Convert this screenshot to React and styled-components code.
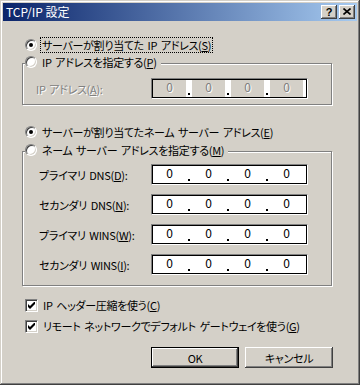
import React from 'react';
import styled, { createGlobalStyle, css } from 'styled-components';

const Global = createGlobalStyle`
  html, body { margin: 0; padding: 0; background: #D4D0C8; }
  #root { width: 360px; height: 385px; }
`;

const raised = css`
  box-shadow: inset -1px -1px #404040, inset 1px 1px #fff, inset -2px -2px #808080, inset 2px 2px #D4D0C8;
`;

const Window = styled.div`
  box-sizing: border-box;
  width: 360px;
  height: 385px;
  padding: 3px;
  background: #D4D0C8;
  box-shadow: inset -1px -1px #404040, inset 1px 1px #D4D0C8, inset -2px -2px #808080, inset 2px 2px #fff;
  display: flex;
  flex-direction: column;
  font-family: "Noto Sans CJK JP", "Noto Sans", sans-serif;
  font-size: 11px;
  letter-spacing: -0.3px;
  word-spacing: 1.5px;
  font-feature-settings: "palt";
  color: #000;
`;

const TitleBar = styled.div`
  height: 18px;
  display: flex;
  align-items: center;
  justify-content: space-between;
  background: linear-gradient(to right, #0A246A, #A6CAF0);
  padding: 0 2px 0 2px;
`;

const Title = styled.span`
  color: #fff;
  font-size: 12px;
  letter-spacing: 0;
  word-spacing: 0;
  line-height: 18px;
  padding-left: 1px;
`;

const TitleButtons = styled.div`
  display: flex;
  gap: 2px;
`;

const TitleButton = styled.div`
  width: 16px;
  height: 14px;
  box-sizing: border-box;
  background: #D4D0C8;
  ${raised};
  display: flex;
  align-items: center;
  justify-content: center;
  font-family: "Liberation Sans", sans-serif;
  font-weight: bold;
  font-size: 11px;
  letter-spacing: 0;
  line-height: 14px;
  padding-bottom: 1px;
`;

const Content = styled.div`
  display: flex;
  flex-direction: column;
  padding: 15px 25px 0 19px;
`;

const OptionRow = styled.div`
  display: flex;
  align-items: center;
  height: 18px;
  margin-left: ${p => p.$indent ?? 3}px;
  margin-top: ${p => p.$mt ?? 0}px;
  align-self: flex-start;
  background: #D4D0C8;
  padding-right: ${p => p.$pr ?? 0}px;
`;

const RadioMark = styled.span`
  box-sizing: border-box;
  width: 12px;
  height: 12px;
  border-radius: 50%;
  border: 1px solid;
  border-color: #808080 #fff #fff #808080;
  box-shadow: inset 1px 1px #404040, inset -1px -1px #D4D0C8;
  background: #fff;
  display: flex;
  align-items: center;
  justify-content: center;
  flex: none;
  &::after {
    content: "";
    width: 4px;
    height: 4px;
    border-radius: 50%;
    background: ${p => (p.$checked ? '#000' : 'transparent')};
  }
`;

const CheckMark = styled.span`
  box-sizing: border-box;
  width: 13px;
  height: 13px;
  border: 1px solid;
  border-color: #808080 #fff #fff #808080;
  box-shadow: inset 1px 1px #404040, inset -1px -1px #D4D0C8;
  background: #fff;
  display: flex;
  align-items: center;
  justify-content: center;
  flex: none;
`;

const OptionLabel = styled.span`
  margin-left: ${p => p.$ml ?? 3}px;
  padding: 0 1px;
  border: 1px dotted ${p => (p.$focus ? '#000' : 'transparent')};
  line-height: 14px;
  white-space: nowrap;
`;

const Group = styled.div`
  display: flex;
  flex-direction: column;
  border: 1px solid #808080;
  box-shadow: inset 1px 1px #fff, 1px 1px #fff;
  margin-top: ${p => p.$mt}px;
  padding-bottom: ${p => p.$pb}px;
  width: 310px;
  box-sizing: border-box;
`;

const FieldRows = styled.div`
  display: flex;
  flex-direction: column;
  gap: 9px;
  margin-top: ${p => p.$mt}px;
`;

const FieldRow = styled.div`
  display: grid;
  grid-template-columns: 128px 157px;
  align-items: center;
`;

const FieldLabel = styled.span`
  padding-left: ${p => p.$pl}px;
  padding-top: 1px;
  white-space: nowrap;
  color: ${p => (p.$disabled ? '#808080' : '#000')};
  text-shadow: ${p => (p.$disabled ? '1px 1px #fff' : 'none')};
`;

const AddressBox = styled.div`
  box-sizing: border-box;
  width: 157px;
  height: 21px;
  border: 1px solid;
  border-color: #808080 #fff #fff #808080;
  box-shadow: inset 0 0 0 1px #000;
  background: #fff;
  padding: 1px;
  display: flex;
`;

const Segment = styled.span`
  width: 33px;
  display: flex;
  justify-content: center;
  align-items: flex-start;
  font-size: 12px;
  letter-spacing: 0;
  line-height: 12px;
  padding-top: 1px;
  background: ${p => (p.$disabled ? '#D4D0C8' : '#fff')};
  color: ${p => (p.$disabled ? '#808080' : '#000')};
  text-shadow: ${p => (p.$disabled ? '1px 1px #fff' : 'none')};
`;

const Sep = styled.span`
  width: 6px;
  display: flex;
  justify-content: center;
  align-items: flex-end;
  padding-bottom: 2px;
  box-sizing: border-box;
  &::after {
    content: "";
    width: 2px;
    height: 2px;
    background: #000;
  }
`;

const ButtonRow = styled.div`
  display: flex;
  justify-content: flex-end;
  gap: 6px;
  margin-top: 12px;
  margin-right: -1px;
`;

const Button = styled.div`
  box-sizing: border-box;
  width: 88px;
  height: 21px;
  display: flex;
  align-items: center;
  justify-content: center;
  background: #D4D0C8;
  ${raised};
  ${p => p.$default && css`
    border: 1px solid #000;
  `}
`;

const Address = ({ disabled }) => (
  <AddressBox>
    {[0, 1, 2, 3].map(i => (
      <React.Fragment key={i}>
        {i > 0 && <Sep />}
        <Segment $disabled={disabled}>0</Segment>
      </React.Fragment>
    ))}
  </AddressBox>
);

const Radio = ({ checked, focus, children, ...rest }) => (
  <OptionRow {...rest}>
    <RadioMark $checked={checked} />
    <OptionLabel $focus={focus}>{children}</OptionLabel>
  </OptionRow>
);

const Check = ({ children, ...rest }) => (
  <OptionRow {...rest}>
    <CheckMark>
      <svg width="7" height="7" viewBox="0 0 7 7">
        <path d="M0 2 L2 4 L6 0 L7 0 L7 2 L2 7 L0 5 Z" fill="#000" />
      </svg>
    </CheckMark>
    <OptionLabel $ml={3}>{children}</OptionLabel>
  </OptionRow>
);

export default function App() {
  return (
    <>
      <Global />
      <Window>
        <TitleBar>
          <Title>TCP/IP 設定</Title>
          <TitleButtons>
            <TitleButton>?</TitleButton>
            <TitleButton>
              <svg width="8" height="7" viewBox="0 0 8 7">
                <path d="M0.5 0.5 L7.5 6.5 M7.5 0.5 L0.5 6.5" stroke="#000" strokeWidth="1.6" />
              </svg>
            </TitleButton>
          </TitleButtons>
        </TitleBar>
        <Content>
          <Radio checked focus>サーバーが割り当てた IP アドレス(<u>S</u>)</Radio>
          <Group $mt={9} $pb={5}>
            <Radio $indent={2} $mt={-11} $pr={2}>IP アドレスを指定する(<u>P</u>)</Radio>
            <FieldRows $mt={7}>
              <FieldRow>
                <FieldLabel $pl={13} $disabled>IP アドレス(<u>A</u>):</FieldLabel>
                <Address disabled />
              </FieldRow>
            </FieldRows>
          </Group>
          <Radio checked $mt={18}>サーバーが割り当てたネーム サーバー アドレス(<u>E</u>)</Radio>
          <Group $mt={10} $pb={10}>
            <Radio $indent={2} $mt={-11} $pr={2}>ネーム サーバー アドレスを指定する(<u>M</u>)</Radio>
            <FieldRows $mt={5}>
              <FieldRow>
                <FieldLabel $pl={16}>プライマリ DNS(<u>D</u>):</FieldLabel>
                <Address />
              </FieldRow>
              <FieldRow>
                <FieldLabel $pl={16}>セカンダリ DNS(<u>N</u>):</FieldLabel>
                <Address />
              </FieldRow>
              <FieldRow>
                <FieldLabel $pl={16}>プライマリ WINS(<u>W</u>):</FieldLabel>
                <Address />
              </FieldRow>
              <FieldRow>
                <FieldLabel $pl={16}>セカンダリ WINS(<u>I</u>):</FieldLabel>
                <Address />
              </FieldRow>
            </FieldRows>
          </Group>
          <Check $mt={10}>IP ヘッダー圧縮を使う(<u>C</u>)</Check>
          <Check $mt={3}>リモート ネットワークでデフォルト ゲートウェイを使う(<u>G</u>)</Check>
          <ButtonRow>
            <Button $default>OK</Button>
            <Button>キャンセル</Button>
          </ButtonRow>
        </Content>
      </Window>
    </>
  );
}
